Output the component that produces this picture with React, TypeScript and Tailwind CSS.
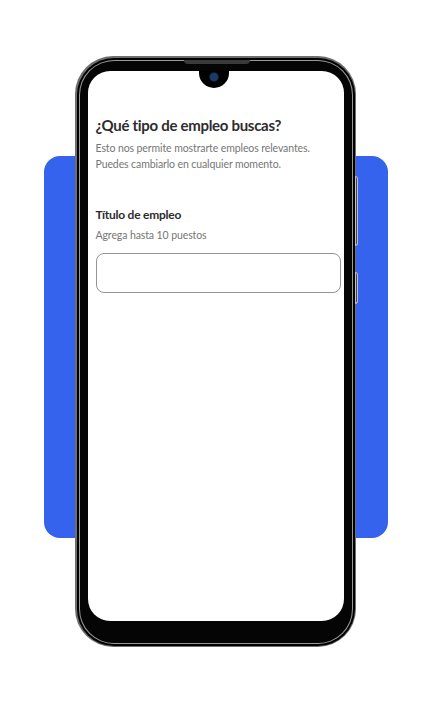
export default function App() {
  return (
    <div className="relative h-[704px] w-[434px] overflow-hidden bg-white font-['Lato',sans-serif]">
      {/* blue backdrop */}
      <div className="absolute left-[44px] top-[156px] h-[382px] w-[344px] rounded-[16px] bg-[#3563ee]" />

      {/* phone */}
      <div className="absolute left-[75px] top-[56px]">
        {/* side buttons */}
        <div className="absolute right-[-2px] top-[120px] h-[70px] w-[3px] rounded-r border border-[#bdbdbd] bg-[#444]" />
        <div className="absolute right-[-2px] top-[216px] h-[32px] w-[3px] rounded-r border border-[#bdbdbd] bg-[#444]" />

        <div className="rounded-[38px] bg-[#6e6e6e] p-[1.5px]">
          <div className="rounded-[37px] bg-black p-[2px]">
            <div className="rounded-[35px] bg-[#9a9a9a] p-[1px]">
              <div className="relative rounded-[34px] bg-[#050505] px-[8px] pb-[21.5px] pt-[10.5px]">
                {/* speaker */}
                <div className="absolute left-[104px] top-[-1px] h-[4px] w-[66px] rounded-b bg-[#3a3a3a]" />

                {/* screen */}
                <div className="relative h-[550px] w-[256px] overflow-hidden rounded-[22px] bg-white">
                  {/* notch */}
                  <div className="absolute left-[111px] top-0 flex h-[17px] w-[30px] items-start justify-center rounded-b-[15px] bg-black">
                    <div className="mt-[2px] h-[8px] w-[8px] rounded-full bg-[#1d3a66] ring-1 ring-[#0a1a33]" />
                  </div>

                  <div className="flex flex-col px-[8px] pt-[43px]">
                    <h1 className="text-[15px] font-bold leading-[22px] tracking-[-0.3px] text-[#2d2d2d]">
                      ¿Qué tipo de empleo buscas?
                    </h1>
                    <p className="mt-[4px] text-[10.5px] leading-[16px] tracking-[-0.1px] text-[#767676]">
                      Esto nos permite mostrarte empleos relevantes.
                      <br />
                      Puedes cambiarlo en cualquier momento.
                    </p>

                    <h2 className="mt-[34px] text-[12px] font-bold leading-[18px] tracking-[-0.25px] text-[#2d2d2d]">
                      Título de empleo
                    </h2>
                    <p className="mt-[3px] text-[10.5px] leading-[16px] tracking-[-0.1px] text-[#767676]">
                      Agrega hasta 10 puestos
                    </p>
                    <div className="mt-[10px] h-[40px] w-[245px] rounded-[8px] border border-[#949494] bg-white" />
                  </div>
                </div>
              </div>
            </div>
          </div>
        </div>
      </div>
    </div>
  );
}
